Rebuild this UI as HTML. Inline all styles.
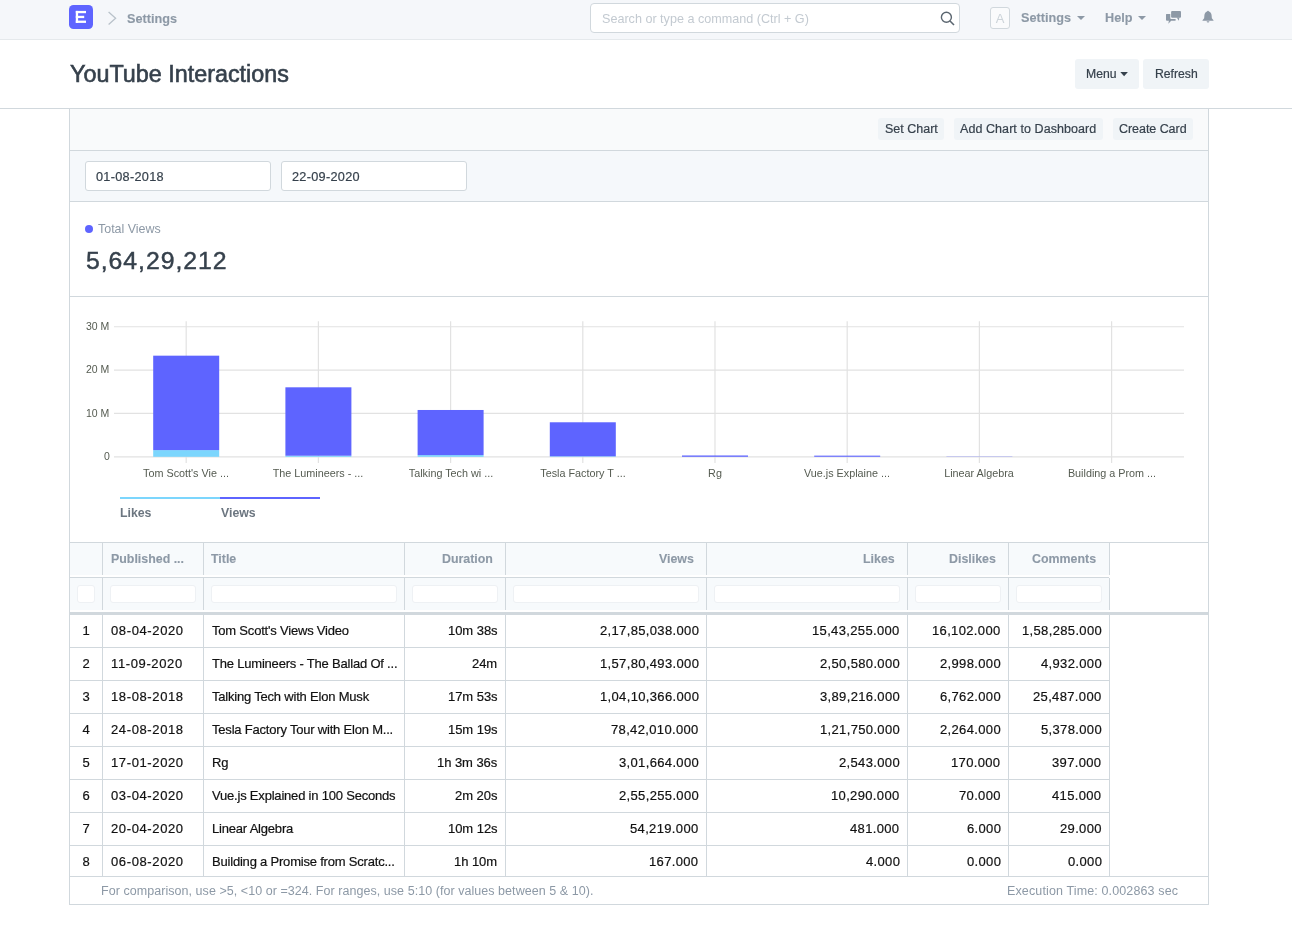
<!DOCTYPE html>
<html>
<head>
<meta charset="utf-8">
<style>
*{box-sizing:border-box;margin:0;padding:0}
html,body{width:1292px;height:932px;overflow:hidden;background:#fff}
body{position:relative;font-family:"Liberation Sans",sans-serif;color:#36414c}
.a{position:absolute}
.t{position:absolute;white-space:nowrap;line-height:1;will-change:transform}
</style>
</head>
<body>
<div class="a" style="left:0px;top:0px;width:1292px;height:39px;background:#f5f7fa;"></div>
<div class="a" style="left:0px;top:39px;width:1292px;height:1px;background:#e5e9ec;"></div>
<svg class="a" style="left:0;top:0" width="1292" height="40">
  <rect x="69" y="5" width="24" height="24" rx="4.5" fill="#5e64ff"/>
  <g fill="#fff">
    <rect x="75.8" y="10.9" width="2.3" height="12"/>
    <rect x="75.8" y="10.9" width="10.2" height="2.3"/>
    <rect x="75.8" y="15.8" width="8.4" height="2.3"/>
    <rect x="75.8" y="20.6" width="10.2" height="2.3"/>
  </g>
  <polyline points="108.6,12 115.6,18.3 108.6,24.6" fill="none" stroke="#b9c2ca" stroke-width="1.3"/>
</svg>
<div class="t" style="top:12.69px;font-size:12.67px;color:#8d99a6;font-weight:bold;left:126.60px;-webkit-text-stroke:0.12px currentColor">Settings</div>
<div class="a" style="left:590px;top:3px;width:370px;height:30px;background:#fff;border:1px solid #d1d8dd;border-radius:4px"></div>
<div class="t" style="top:12.95px;font-size:12.6px;color:#c3cad1;left:601.80px;">Search or type a command (Ctrl + G)</div>
<svg class="a" style="left:930px;top:5px" width="30" height="26">
  <circle cx="16.4" cy="12.3" r="5" fill="none" stroke="#5b6670" stroke-width="1.4"/>
  <line x1="20" y1="16" x2="24" y2="20" stroke="#5b6670" stroke-width="1.6"/>
</svg>
<div class="a" style="left:990px;top:7px;width:20px;height:22px;background:#fafbfc;border:1px solid #d1d8dd;border-radius:3px"></div>
<div class="t" style="top:11.71px;font-size:13px;color:#cdd4da;left:700.00px;width:600px;text-align:center;">A</div>
<div class="t" style="top:12.29px;font-size:12.67px;color:#8d99a6;font-weight:bold;left:1020.70px;-webkit-text-stroke:0.12px currentColor">Settings</div>
<div class="t" style="top:12.29px;font-size:12.67px;color:#8d99a6;font-weight:bold;left:1105.00px;-webkit-text-stroke:0.12px currentColor">Help</div>
<svg class="a" style="left:1070px;top:0" width="150" height="40">
  <polygon points="7,16 15,16 11,20" fill="#8d99a6"/>
  <polygon points="68,16 76,16 72,20" fill="#8d99a6"/>
  <path d="M96.5 14 h4 v5.1 h4.5 a0.8 0.8 0 0 1 0 1.6 H101.2 L98.3 23.8 L98.9 20.7 H96.9 a0.9 0.9 0 0 1 -0.9 -0.9 V14.9 a0.9 0.9 0 0 1 0.5 -0.9z" fill="#8d99a6"/>
  <rect x="100.6" y="10.6" width="11" height="7.8" rx="1.2" fill="#f5f7fa"/>
  <rect x="101.1" y="11" width="9.9" height="6.8" rx="1" fill="#8d99a6"/>
  <polygon points="106.7,17.6 109.3,17.6 108.9,20.7" fill="#8d99a6"/>
  <path d="M138 10.8 c0.55 0 0.9 0.35 0.9 0.7 c1.7 0.5 2.5 2.0 2.7 3.8 l0.25 3.0 l1.65 1.9 v0.5 h-11 v-0.5 l1.65 -1.9 l0.25 -3.0 c0.2 -1.8 1 -3.3 2.7 -3.8 c0 -0.35 0.35 -0.7 0.9 -0.7z" fill="#8d99a6"/>
  <path d="M136.6 21.2 h2.8 a1.4 1.4 0 0 1 -2.8 0z" fill="#8d99a6"/>
</svg>
<div class="t" style="top:63.17px;font-size:23.35px;color:#36414c;left:70.00px;-webkit-text-stroke:0.6px #36414c">YouTube Interactions</div>
<div class="a" style="left:1075px;top:59px;width:64px;height:30px;background:#f0f4f7;border-radius:3px"></div>
<div class="t" style="top:67.59px;font-size:12.2px;color:#36414c;left:1086.30px;-webkit-text-stroke:0.2px currentColor">Menu</div>
<svg class="a" style="left:1115px;top:66px" width="16" height="14"><polygon points="5.3,6 12.9,6 9.1,10.2" fill="#36414c"/></svg>
<div class="a" style="left:1143px;top:59px;width:66px;height:30px;background:#f0f4f7;border-radius:3px"></div>
<div class="t" style="top:67.59px;font-size:12.2px;color:#36414c;left:1154.70px;-webkit-text-stroke:0.2px currentColor">Refresh</div>
<div class="a" style="left:0px;top:108px;width:1292px;height:1px;background:#d1d8dd;"></div>
<div class="a" style="left:69px;top:108px;width:1px;height:797px;background:#d1d8dd;"></div>
<div class="a" style="left:1208px;top:108px;width:1px;height:797px;background:#d1d8dd;"></div>
<div class="a" style="left:69px;top:904px;width:1140px;height:1px;background:#d1d8dd;"></div>
<div class="a" style="left:70px;top:109px;width:1138px;height:41px;background:#f9fafb;"></div>
<div class="a" style="left:70px;top:150px;width:1138px;height:1px;background:#d1d8dd;"></div>
<div class="a" style="left:878px;top:118px;width:66px;height:22px;background:#f0f4f7;border-radius:3px"></div>
<div class="a" style="left:954px;top:118px;width:149px;height:22px;background:#f0f4f7;border-radius:3px"></div>
<div class="a" style="left:1113px;top:118px;width:80px;height:22px;background:#f0f4f7;border-radius:3px"></div>
<div class="t" style="top:122.54px;font-size:12.5px;color:#36414c;left:884.50px;-webkit-text-stroke:0.2px currentColor">Set Chart</div>
<div class="t" style="top:122.54px;font-size:12.5px;color:#36414c;letter-spacing:0.07px;left:960.20px;-webkit-text-stroke:0.2px currentColor">Add Chart to Dashboard</div>
<div class="t" style="top:122.54px;font-size:12.5px;color:#36414c;letter-spacing:-0.05px;left:1119.30px;-webkit-text-stroke:0.2px currentColor">Create Card</div>
<div class="a" style="left:70px;top:151px;width:1138px;height:50px;background:#f5f8fb;"></div>
<div class="a" style="left:70px;top:201px;width:1138px;height:1px;background:#d1d8dd;"></div>
<div class="a" style="left:85px;top:161px;width:186px;height:30px;background:#fff;border:1px solid #d1d8dd;border-radius:3px"></div>
<div class="a" style="left:281px;top:161px;width:186px;height:30px;background:#fff;border:1px solid #d1d8dd;border-radius:3px"></div>
<div class="t" style="top:170.77px;font-size:12.7px;color:#36414c;letter-spacing:0.3px;left:96.20px;-webkit-text-stroke:0.2px currentColor">01-08-2018</div>
<div class="t" style="top:170.77px;font-size:12.7px;color:#36414c;letter-spacing:0.3px;left:292.20px;-webkit-text-stroke:0.2px currentColor">22-09-2020</div>
<div class="a" style="left:85px;top:225px;width:8px;height:8px;border-radius:50%;background:#5e64ff"></div>
<div class="t" style="top:223.27px;font-size:12.46px;color:#8d99a6;left:98.00px;">Total Views</div>
<div class="t" style="top:249.34px;font-size:24.8px;color:#36414c;letter-spacing:0.95px;left:86.20px;-webkit-text-stroke:0.45px #36414c">5,64,29,212</div>
<div class="a" style="left:70px;top:296px;width:1138px;height:1px;background:#d1d8dd;"></div>
<svg class="a" style="left:0;top:0" width="1292" height="932">
<line x1="114" x2="1184" y1="456.80" y2="456.80" stroke="#e2e2e2" stroke-width="1.2"/>
<line x1="114" x2="1184" y1="413.45" y2="413.45" stroke="#e2e2e2" stroke-width="1.2"/>
<line x1="114" x2="1184" y1="370.10" y2="370.10" stroke="#e2e2e2" stroke-width="1.2"/>
<line x1="114" x2="1184" y1="326.75" y2="326.75" stroke="#e2e2e2" stroke-width="1.2"/>
<line x1="186.20" x2="186.20" y1="321.2" y2="462.9" stroke="#e2e2e2" stroke-width="1.2"/>
<line x1="318.40" x2="318.40" y1="321.2" y2="462.9" stroke="#e2e2e2" stroke-width="1.2"/>
<line x1="450.60" x2="450.60" y1="321.2" y2="462.9" stroke="#e2e2e2" stroke-width="1.2"/>
<line x1="582.80" x2="582.80" y1="321.2" y2="462.9" stroke="#e2e2e2" stroke-width="1.2"/>
<line x1="715.00" x2="715.00" y1="321.2" y2="462.9" stroke="#e2e2e2" stroke-width="1.2"/>
<line x1="847.20" x2="847.20" y1="321.2" y2="462.9" stroke="#e2e2e2" stroke-width="1.2"/>
<line x1="979.40" x2="979.40" y1="321.2" y2="462.9" stroke="#e2e2e2" stroke-width="1.2"/>
<line x1="1111.60" x2="1111.60" y1="321.2" y2="462.9" stroke="#e2e2e2" stroke-width="1.2"/>
<rect x="153.20" y="450.11" width="66" height="6.69" fill="#7cd6fd"/>
<rect x="153.20" y="355.67" width="66" height="94.44" fill="#5e64ff"/>
<rect x="285.40" y="455.71" width="66" height="1.09" fill="#7cd6fd"/>
<rect x="285.40" y="387.31" width="66" height="68.41" fill="#5e64ff"/>
<rect x="417.60" y="455.11" width="66" height="1.69" fill="#7cd6fd"/>
<rect x="417.60" y="409.98" width="66" height="45.13" fill="#5e64ff"/>
<rect x="549.80" y="456.27" width="66" height="0.53" fill="#7cd6fd"/>
<rect x="549.80" y="422.28" width="66" height="34.00" fill="#5e64ff"/>
<rect x="682.00" y="455.48" width="66" height="1.31" fill="#5e64ff"/>
<rect x="814.20" y="455.65" width="66" height="1.11" fill="#5e64ff"/>
<rect x="946.40" y="456.56" width="66" height="0.24" fill="#5e64ff"/>
</svg>
<div class="t" style="top:450.93px;font-size:10.5px;color:#555b51;right:1182.50px;">0</div>
<div class="t" style="top:407.58px;font-size:10.5px;color:#555b51;right:1182.50px;">10 M</div>
<div class="t" style="top:364.23px;font-size:10.5px;color:#555b51;right:1182.50px;">20 M</div>
<div class="t" style="top:320.88px;font-size:10.5px;color:#555b51;right:1182.50px;">30 M</div>
<div class="t" style="top:467.67px;font-size:10.8px;color:#555b51;left:-113.80px;width:600px;text-align:center;">Tom Scott&#x27;s Vie ...</div>
<div class="t" style="top:467.67px;font-size:10.8px;color:#555b51;left:18.40px;width:600px;text-align:center;">The Lumineers - ...</div>
<div class="t" style="top:467.67px;font-size:10.8px;color:#555b51;left:150.60px;width:600px;text-align:center;">Talking Tech wi ...</div>
<div class="t" style="top:467.67px;font-size:10.8px;color:#555b51;left:282.80px;width:600px;text-align:center;">Tesla Factory T ...</div>
<div class="t" style="top:467.67px;font-size:10.8px;color:#555b51;left:415.00px;width:600px;text-align:center;">Rg</div>
<div class="t" style="top:467.67px;font-size:10.8px;color:#555b51;left:547.20px;width:600px;text-align:center;">Vue.js Explaine ...</div>
<div class="t" style="top:467.67px;font-size:10.8px;color:#555b51;left:679.40px;width:600px;text-align:center;">Linear Algebra</div>
<div class="t" style="top:467.67px;font-size:10.8px;color:#555b51;left:811.60px;width:600px;text-align:center;">Building a Prom ...</div>
<div class="a" style="left:120px;top:497px;width:100px;height:2px;background:#7cd6fd;"></div>
<div class="a" style="left:220px;top:497px;width:100px;height:2px;background:#5e64ff;"></div>
<div class="t" style="top:507.41px;font-size:12.3px;color:#6c7680;font-weight:bold;left:120.40px;">Likes</div>
<div class="t" style="top:507.41px;font-size:12.3px;color:#6c7680;font-weight:bold;left:220.70px;">Views</div>
<div class="a" style="left:70px;top:542px;width:1138px;height:1px;background:#d1d8dd;"></div>
<div class="a" style="left:70px;top:543px;width:1039px;height:32px;background:#f7fafc;"></div>
<div class="a" style="left:70px;top:577px;width:1039px;height:1px;background:#d1d8dd;"></div>
<div class="a" style="left:70px;top:578px;width:1039px;height:32px;background:#f7fafc;"></div>
<div class="a" style="left:70px;top:612px;width:1138px;height:3px;background:#d1d8dd;"></div>
<div class="a" style="left:102px;top:543px;width:1px;height:32px;background:#d1d8dd;"></div>
<div class="a" style="left:102px;top:578px;width:32px;height:0px;background:#d1d8dd;"></div>
<div class="a" style="left:203px;top:543px;width:1px;height:32px;background:#d1d8dd;"></div>
<div class="a" style="left:203px;top:578px;width:32px;height:0px;background:#d1d8dd;"></div>
<div class="a" style="left:404px;top:543px;width:1px;height:32px;background:#d1d8dd;"></div>
<div class="a" style="left:404px;top:578px;width:32px;height:0px;background:#d1d8dd;"></div>
<div class="a" style="left:505px;top:543px;width:1px;height:32px;background:#d1d8dd;"></div>
<div class="a" style="left:505px;top:578px;width:32px;height:0px;background:#d1d8dd;"></div>
<div class="a" style="left:706px;top:543px;width:1px;height:32px;background:#d1d8dd;"></div>
<div class="a" style="left:706px;top:578px;width:32px;height:0px;background:#d1d8dd;"></div>
<div class="a" style="left:907px;top:543px;width:1px;height:32px;background:#d1d8dd;"></div>
<div class="a" style="left:907px;top:578px;width:32px;height:0px;background:#d1d8dd;"></div>
<div class="a" style="left:1008px;top:543px;width:1px;height:32px;background:#d1d8dd;"></div>
<div class="a" style="left:1008px;top:578px;width:32px;height:0px;background:#d1d8dd;"></div>
<div class="a" style="left:1109px;top:543px;width:1px;height:32px;background:#d1d8dd;"></div>
<div class="a" style="left:1109px;top:578px;width:32px;height:0px;background:#d1d8dd;"></div>
<div class="a" style="left:102px;top:578px;width:1px;height:32px;background:#d1d8dd;"></div>
<div class="a" style="left:203px;top:578px;width:1px;height:32px;background:#d1d8dd;"></div>
<div class="a" style="left:404px;top:578px;width:1px;height:32px;background:#d1d8dd;"></div>
<div class="a" style="left:505px;top:578px;width:1px;height:32px;background:#d1d8dd;"></div>
<div class="a" style="left:706px;top:578px;width:1px;height:32px;background:#d1d8dd;"></div>
<div class="a" style="left:907px;top:578px;width:1px;height:32px;background:#d1d8dd;"></div>
<div class="a" style="left:1008px;top:578px;width:1px;height:32px;background:#d1d8dd;"></div>
<div class="a" style="left:1109px;top:578px;width:1px;height:32px;background:#d1d8dd;"></div>
<div class="a" style="left:77px;top:585px;width:18px;height:18px;background:#fff;border:1px solid #eef1f4;border-radius:3px"></div>
<div class="a" style="left:110px;top:585px;width:86px;height:18px;background:#fff;border:1px solid #eef1f4;border-radius:3px"></div>
<div class="a" style="left:211px;top:585px;width:186px;height:18px;background:#fff;border:1px solid #eef1f4;border-radius:3px"></div>
<div class="a" style="left:412px;top:585px;width:86px;height:18px;background:#fff;border:1px solid #eef1f4;border-radius:3px"></div>
<div class="a" style="left:513px;top:585px;width:186px;height:18px;background:#fff;border:1px solid #eef1f4;border-radius:3px"></div>
<div class="a" style="left:714px;top:585px;width:186px;height:18px;background:#fff;border:1px solid #eef1f4;border-radius:3px"></div>
<div class="a" style="left:915px;top:585px;width:86px;height:18px;background:#fff;border:1px solid #eef1f4;border-radius:3px"></div>
<div class="a" style="left:1016px;top:585px;width:86px;height:18px;background:#fff;border:1px solid #eef1f4;border-radius:3px"></div>
<div class="t" style="top:553.02px;font-size:12.4px;color:#8d99a6;font-weight:bold;left:110.80px;-webkit-text-stroke:0.12px currentColor">Published ...</div>
<div class="t" style="top:553.02px;font-size:12.4px;color:#8d99a6;font-weight:bold;left:211.00px;-webkit-text-stroke:0.12px currentColor">Title</div>
<div class="t" style="top:553.02px;font-size:12.4px;color:#8d99a6;font-weight:bold;right:799.50px;-webkit-text-stroke:0.12px currentColor">Duration</div>
<div class="t" style="top:553.02px;font-size:12.4px;color:#8d99a6;font-weight:bold;right:598.50px;-webkit-text-stroke:0.12px currentColor">Views</div>
<div class="t" style="top:553.02px;font-size:12.4px;color:#8d99a6;font-weight:bold;right:397.50px;-webkit-text-stroke:0.12px currentColor">Likes</div>
<div class="t" style="top:553.02px;font-size:12.4px;color:#8d99a6;font-weight:bold;right:296.50px;-webkit-text-stroke:0.12px currentColor">Dislikes</div>
<div class="t" style="top:553.02px;font-size:12.4px;color:#8d99a6;font-weight:bold;right:195.50px;-webkit-text-stroke:0.12px currentColor">Comments</div>
<div class="a" style="left:102px;top:615px;width:1px;height:33px;background:#d1d8dd;"></div>
<div class="a" style="left:203px;top:615px;width:1px;height:33px;background:#d1d8dd;"></div>
<div class="a" style="left:404px;top:615px;width:1px;height:33px;background:#d1d8dd;"></div>
<div class="a" style="left:505px;top:615px;width:1px;height:33px;background:#d1d8dd;"></div>
<div class="a" style="left:706px;top:615px;width:1px;height:33px;background:#d1d8dd;"></div>
<div class="a" style="left:907px;top:615px;width:1px;height:33px;background:#d1d8dd;"></div>
<div class="a" style="left:1008px;top:615px;width:1px;height:33px;background:#d1d8dd;"></div>
<div class="a" style="left:1109px;top:615px;width:1px;height:33px;background:#d1d8dd;"></div>
<div class="a" style="left:70px;top:647px;width:1039px;height:1px;background:#d1d8dd;"></div>
<div class="t" style="top:623.72px;font-size:13px;color:#111;left:-214.00px;width:600px;text-align:center;-webkit-text-stroke:0.2px currentColor">1</div>
<div class="t" style="top:623.72px;font-size:13px;color:#111;letter-spacing:0.62px;left:110.60px;-webkit-text-stroke:0.2px currentColor">08-04-2020</div>
<div class="t" style="top:623.72px;font-size:13px;color:#111;letter-spacing:-0.2px;left:211.50px;-webkit-text-stroke:0.2px currentColor">Tom Scott&#x27;s Views Video</div>
<div class="t" style="top:623.72px;font-size:13px;color:#111;letter-spacing:-0.05px;right:794.55px;-webkit-text-stroke:0.2px currentColor">10m 38s</div>
<div class="t" style="top:623.72px;font-size:13px;color:#111;letter-spacing:0.35px;right:593.15px;-webkit-text-stroke:0.2px currentColor">2,17,85,038.000</div>
<div class="t" style="top:623.72px;font-size:13px;color:#111;letter-spacing:0.35px;right:392.15px;-webkit-text-stroke:0.2px currentColor">15,43,255.000</div>
<div class="t" style="top:623.72px;font-size:13px;color:#111;letter-spacing:0.35px;right:291.15px;-webkit-text-stroke:0.2px currentColor">16,102.000</div>
<div class="t" style="top:623.72px;font-size:13px;color:#111;letter-spacing:0.35px;right:190.15px;-webkit-text-stroke:0.2px currentColor">1,58,285.000</div>
<div class="a" style="left:102px;top:648px;width:1px;height:33px;background:#d1d8dd;"></div>
<div class="a" style="left:203px;top:648px;width:1px;height:33px;background:#d1d8dd;"></div>
<div class="a" style="left:404px;top:648px;width:1px;height:33px;background:#d1d8dd;"></div>
<div class="a" style="left:505px;top:648px;width:1px;height:33px;background:#d1d8dd;"></div>
<div class="a" style="left:706px;top:648px;width:1px;height:33px;background:#d1d8dd;"></div>
<div class="a" style="left:907px;top:648px;width:1px;height:33px;background:#d1d8dd;"></div>
<div class="a" style="left:1008px;top:648px;width:1px;height:33px;background:#d1d8dd;"></div>
<div class="a" style="left:1109px;top:648px;width:1px;height:33px;background:#d1d8dd;"></div>
<div class="a" style="left:70px;top:680px;width:1039px;height:1px;background:#d1d8dd;"></div>
<div class="t" style="top:656.72px;font-size:13px;color:#111;left:-214.00px;width:600px;text-align:center;-webkit-text-stroke:0.2px currentColor">2</div>
<div class="t" style="top:656.72px;font-size:13px;color:#111;letter-spacing:0.62px;left:110.60px;-webkit-text-stroke:0.2px currentColor">11-09-2020</div>
<div class="t" style="top:656.72px;font-size:13px;color:#111;letter-spacing:-0.2px;left:211.50px;-webkit-text-stroke:0.2px currentColor">The Lumineers - The Ballad Of ...</div>
<div class="t" style="top:656.72px;font-size:13px;color:#111;letter-spacing:-0.05px;right:794.55px;-webkit-text-stroke:0.2px currentColor">24m</div>
<div class="t" style="top:656.72px;font-size:13px;color:#111;letter-spacing:0.35px;right:593.15px;-webkit-text-stroke:0.2px currentColor">1,57,80,493.000</div>
<div class="t" style="top:656.72px;font-size:13px;color:#111;letter-spacing:0.35px;right:392.15px;-webkit-text-stroke:0.2px currentColor">2,50,580.000</div>
<div class="t" style="top:656.72px;font-size:13px;color:#111;letter-spacing:0.35px;right:291.15px;-webkit-text-stroke:0.2px currentColor">2,998.000</div>
<div class="t" style="top:656.72px;font-size:13px;color:#111;letter-spacing:0.35px;right:190.15px;-webkit-text-stroke:0.2px currentColor">4,932.000</div>
<div class="a" style="left:102px;top:681px;width:1px;height:33px;background:#d1d8dd;"></div>
<div class="a" style="left:203px;top:681px;width:1px;height:33px;background:#d1d8dd;"></div>
<div class="a" style="left:404px;top:681px;width:1px;height:33px;background:#d1d8dd;"></div>
<div class="a" style="left:505px;top:681px;width:1px;height:33px;background:#d1d8dd;"></div>
<div class="a" style="left:706px;top:681px;width:1px;height:33px;background:#d1d8dd;"></div>
<div class="a" style="left:907px;top:681px;width:1px;height:33px;background:#d1d8dd;"></div>
<div class="a" style="left:1008px;top:681px;width:1px;height:33px;background:#d1d8dd;"></div>
<div class="a" style="left:1109px;top:681px;width:1px;height:33px;background:#d1d8dd;"></div>
<div class="a" style="left:70px;top:713px;width:1039px;height:1px;background:#d1d8dd;"></div>
<div class="t" style="top:689.72px;font-size:13px;color:#111;left:-214.00px;width:600px;text-align:center;-webkit-text-stroke:0.2px currentColor">3</div>
<div class="t" style="top:689.72px;font-size:13px;color:#111;letter-spacing:0.62px;left:110.60px;-webkit-text-stroke:0.2px currentColor">18-08-2018</div>
<div class="t" style="top:689.72px;font-size:13px;color:#111;letter-spacing:-0.2px;left:211.50px;-webkit-text-stroke:0.2px currentColor">Talking Tech with Elon Musk</div>
<div class="t" style="top:689.72px;font-size:13px;color:#111;letter-spacing:-0.05px;right:794.55px;-webkit-text-stroke:0.2px currentColor">17m 53s</div>
<div class="t" style="top:689.72px;font-size:13px;color:#111;letter-spacing:0.35px;right:593.15px;-webkit-text-stroke:0.2px currentColor">1,04,10,366.000</div>
<div class="t" style="top:689.72px;font-size:13px;color:#111;letter-spacing:0.35px;right:392.15px;-webkit-text-stroke:0.2px currentColor">3,89,216.000</div>
<div class="t" style="top:689.72px;font-size:13px;color:#111;letter-spacing:0.35px;right:291.15px;-webkit-text-stroke:0.2px currentColor">6,762.000</div>
<div class="t" style="top:689.72px;font-size:13px;color:#111;letter-spacing:0.35px;right:190.15px;-webkit-text-stroke:0.2px currentColor">25,487.000</div>
<div class="a" style="left:102px;top:714px;width:1px;height:33px;background:#d1d8dd;"></div>
<div class="a" style="left:203px;top:714px;width:1px;height:33px;background:#d1d8dd;"></div>
<div class="a" style="left:404px;top:714px;width:1px;height:33px;background:#d1d8dd;"></div>
<div class="a" style="left:505px;top:714px;width:1px;height:33px;background:#d1d8dd;"></div>
<div class="a" style="left:706px;top:714px;width:1px;height:33px;background:#d1d8dd;"></div>
<div class="a" style="left:907px;top:714px;width:1px;height:33px;background:#d1d8dd;"></div>
<div class="a" style="left:1008px;top:714px;width:1px;height:33px;background:#d1d8dd;"></div>
<div class="a" style="left:1109px;top:714px;width:1px;height:33px;background:#d1d8dd;"></div>
<div class="a" style="left:70px;top:746px;width:1039px;height:1px;background:#d1d8dd;"></div>
<div class="t" style="top:722.72px;font-size:13px;color:#111;left:-214.00px;width:600px;text-align:center;-webkit-text-stroke:0.2px currentColor">4</div>
<div class="t" style="top:722.72px;font-size:13px;color:#111;letter-spacing:0.62px;left:110.60px;-webkit-text-stroke:0.2px currentColor">24-08-2018</div>
<div class="t" style="top:722.72px;font-size:13px;color:#111;letter-spacing:-0.2px;left:211.50px;-webkit-text-stroke:0.2px currentColor">Tesla Factory Tour with Elon M...</div>
<div class="t" style="top:722.72px;font-size:13px;color:#111;letter-spacing:-0.05px;right:794.55px;-webkit-text-stroke:0.2px currentColor">15m 19s</div>
<div class="t" style="top:722.72px;font-size:13px;color:#111;letter-spacing:0.35px;right:593.15px;-webkit-text-stroke:0.2px currentColor">78,42,010.000</div>
<div class="t" style="top:722.72px;font-size:13px;color:#111;letter-spacing:0.35px;right:392.15px;-webkit-text-stroke:0.2px currentColor">1,21,750.000</div>
<div class="t" style="top:722.72px;font-size:13px;color:#111;letter-spacing:0.35px;right:291.15px;-webkit-text-stroke:0.2px currentColor">2,264.000</div>
<div class="t" style="top:722.72px;font-size:13px;color:#111;letter-spacing:0.35px;right:190.15px;-webkit-text-stroke:0.2px currentColor">5,378.000</div>
<div class="a" style="left:102px;top:747px;width:1px;height:33px;background:#d1d8dd;"></div>
<div class="a" style="left:203px;top:747px;width:1px;height:33px;background:#d1d8dd;"></div>
<div class="a" style="left:404px;top:747px;width:1px;height:33px;background:#d1d8dd;"></div>
<div class="a" style="left:505px;top:747px;width:1px;height:33px;background:#d1d8dd;"></div>
<div class="a" style="left:706px;top:747px;width:1px;height:33px;background:#d1d8dd;"></div>
<div class="a" style="left:907px;top:747px;width:1px;height:33px;background:#d1d8dd;"></div>
<div class="a" style="left:1008px;top:747px;width:1px;height:33px;background:#d1d8dd;"></div>
<div class="a" style="left:1109px;top:747px;width:1px;height:33px;background:#d1d8dd;"></div>
<div class="a" style="left:70px;top:779px;width:1039px;height:1px;background:#d1d8dd;"></div>
<div class="t" style="top:755.72px;font-size:13px;color:#111;left:-214.00px;width:600px;text-align:center;-webkit-text-stroke:0.2px currentColor">5</div>
<div class="t" style="top:755.72px;font-size:13px;color:#111;letter-spacing:0.62px;left:110.60px;-webkit-text-stroke:0.2px currentColor">17-01-2020</div>
<div class="t" style="top:755.72px;font-size:13px;color:#111;letter-spacing:-0.2px;left:211.50px;-webkit-text-stroke:0.2px currentColor">Rg</div>
<div class="t" style="top:755.72px;font-size:13px;color:#111;letter-spacing:-0.05px;right:794.55px;-webkit-text-stroke:0.2px currentColor">1h 3m 36s</div>
<div class="t" style="top:755.72px;font-size:13px;color:#111;letter-spacing:0.35px;right:593.15px;-webkit-text-stroke:0.2px currentColor">3,01,664.000</div>
<div class="t" style="top:755.72px;font-size:13px;color:#111;letter-spacing:0.35px;right:392.15px;-webkit-text-stroke:0.2px currentColor">2,543.000</div>
<div class="t" style="top:755.72px;font-size:13px;color:#111;letter-spacing:0.35px;right:291.15px;-webkit-text-stroke:0.2px currentColor">170.000</div>
<div class="t" style="top:755.72px;font-size:13px;color:#111;letter-spacing:0.35px;right:190.15px;-webkit-text-stroke:0.2px currentColor">397.000</div>
<div class="a" style="left:102px;top:780px;width:1px;height:33px;background:#d1d8dd;"></div>
<div class="a" style="left:203px;top:780px;width:1px;height:33px;background:#d1d8dd;"></div>
<div class="a" style="left:404px;top:780px;width:1px;height:33px;background:#d1d8dd;"></div>
<div class="a" style="left:505px;top:780px;width:1px;height:33px;background:#d1d8dd;"></div>
<div class="a" style="left:706px;top:780px;width:1px;height:33px;background:#d1d8dd;"></div>
<div class="a" style="left:907px;top:780px;width:1px;height:33px;background:#d1d8dd;"></div>
<div class="a" style="left:1008px;top:780px;width:1px;height:33px;background:#d1d8dd;"></div>
<div class="a" style="left:1109px;top:780px;width:1px;height:33px;background:#d1d8dd;"></div>
<div class="a" style="left:70px;top:812px;width:1039px;height:1px;background:#d1d8dd;"></div>
<div class="t" style="top:788.72px;font-size:13px;color:#111;left:-214.00px;width:600px;text-align:center;-webkit-text-stroke:0.2px currentColor">6</div>
<div class="t" style="top:788.72px;font-size:13px;color:#111;letter-spacing:0.62px;left:110.60px;-webkit-text-stroke:0.2px currentColor">03-04-2020</div>
<div class="t" style="top:788.72px;font-size:13px;color:#111;letter-spacing:-0.2px;left:211.50px;-webkit-text-stroke:0.2px currentColor">Vue.js Explained in 100 Seconds</div>
<div class="t" style="top:788.72px;font-size:13px;color:#111;letter-spacing:-0.05px;right:794.55px;-webkit-text-stroke:0.2px currentColor">2m 20s</div>
<div class="t" style="top:788.72px;font-size:13px;color:#111;letter-spacing:0.35px;right:593.15px;-webkit-text-stroke:0.2px currentColor">2,55,255.000</div>
<div class="t" style="top:788.72px;font-size:13px;color:#111;letter-spacing:0.35px;right:392.15px;-webkit-text-stroke:0.2px currentColor">10,290.000</div>
<div class="t" style="top:788.72px;font-size:13px;color:#111;letter-spacing:0.35px;right:291.15px;-webkit-text-stroke:0.2px currentColor">70.000</div>
<div class="t" style="top:788.72px;font-size:13px;color:#111;letter-spacing:0.35px;right:190.15px;-webkit-text-stroke:0.2px currentColor">415.000</div>
<div class="a" style="left:102px;top:813px;width:1px;height:33px;background:#d1d8dd;"></div>
<div class="a" style="left:203px;top:813px;width:1px;height:33px;background:#d1d8dd;"></div>
<div class="a" style="left:404px;top:813px;width:1px;height:33px;background:#d1d8dd;"></div>
<div class="a" style="left:505px;top:813px;width:1px;height:33px;background:#d1d8dd;"></div>
<div class="a" style="left:706px;top:813px;width:1px;height:33px;background:#d1d8dd;"></div>
<div class="a" style="left:907px;top:813px;width:1px;height:33px;background:#d1d8dd;"></div>
<div class="a" style="left:1008px;top:813px;width:1px;height:33px;background:#d1d8dd;"></div>
<div class="a" style="left:1109px;top:813px;width:1px;height:33px;background:#d1d8dd;"></div>
<div class="a" style="left:70px;top:845px;width:1039px;height:1px;background:#d1d8dd;"></div>
<div class="t" style="top:821.72px;font-size:13px;color:#111;left:-214.00px;width:600px;text-align:center;-webkit-text-stroke:0.2px currentColor">7</div>
<div class="t" style="top:821.72px;font-size:13px;color:#111;letter-spacing:0.62px;left:110.60px;-webkit-text-stroke:0.2px currentColor">20-04-2020</div>
<div class="t" style="top:821.72px;font-size:13px;color:#111;letter-spacing:-0.2px;left:211.50px;-webkit-text-stroke:0.2px currentColor">Linear Algebra</div>
<div class="t" style="top:821.72px;font-size:13px;color:#111;letter-spacing:-0.05px;right:794.55px;-webkit-text-stroke:0.2px currentColor">10m 12s</div>
<div class="t" style="top:821.72px;font-size:13px;color:#111;letter-spacing:0.35px;right:593.15px;-webkit-text-stroke:0.2px currentColor">54,219.000</div>
<div class="t" style="top:821.72px;font-size:13px;color:#111;letter-spacing:0.35px;right:392.15px;-webkit-text-stroke:0.2px currentColor">481.000</div>
<div class="t" style="top:821.72px;font-size:13px;color:#111;letter-spacing:0.35px;right:291.15px;-webkit-text-stroke:0.2px currentColor">6.000</div>
<div class="t" style="top:821.72px;font-size:13px;color:#111;letter-spacing:0.35px;right:190.15px;-webkit-text-stroke:0.2px currentColor">29.000</div>
<div class="a" style="left:102px;top:846px;width:1px;height:30px;background:#d1d8dd;"></div>
<div class="a" style="left:203px;top:846px;width:1px;height:30px;background:#d1d8dd;"></div>
<div class="a" style="left:404px;top:846px;width:1px;height:30px;background:#d1d8dd;"></div>
<div class="a" style="left:505px;top:846px;width:1px;height:30px;background:#d1d8dd;"></div>
<div class="a" style="left:706px;top:846px;width:1px;height:30px;background:#d1d8dd;"></div>
<div class="a" style="left:907px;top:846px;width:1px;height:30px;background:#d1d8dd;"></div>
<div class="a" style="left:1008px;top:846px;width:1px;height:30px;background:#d1d8dd;"></div>
<div class="a" style="left:1109px;top:846px;width:1px;height:30px;background:#d1d8dd;"></div>
<div class="t" style="top:854.72px;font-size:13px;color:#111;left:-214.00px;width:600px;text-align:center;-webkit-text-stroke:0.2px currentColor">8</div>
<div class="t" style="top:854.72px;font-size:13px;color:#111;letter-spacing:0.62px;left:110.60px;-webkit-text-stroke:0.2px currentColor">06-08-2020</div>
<div class="t" style="top:854.72px;font-size:13px;color:#111;letter-spacing:-0.2px;left:211.50px;-webkit-text-stroke:0.2px currentColor">Building a Promise from Scratc...</div>
<div class="t" style="top:854.72px;font-size:13px;color:#111;letter-spacing:-0.05px;right:794.55px;-webkit-text-stroke:0.2px currentColor">1h 10m</div>
<div class="t" style="top:854.72px;font-size:13px;color:#111;letter-spacing:0.35px;right:593.15px;-webkit-text-stroke:0.2px currentColor">167.000</div>
<div class="t" style="top:854.72px;font-size:13px;color:#111;letter-spacing:0.35px;right:392.15px;-webkit-text-stroke:0.2px currentColor">4.000</div>
<div class="t" style="top:854.72px;font-size:13px;color:#111;letter-spacing:0.35px;right:291.15px;-webkit-text-stroke:0.2px currentColor">0.000</div>
<div class="t" style="top:854.72px;font-size:13px;color:#111;letter-spacing:0.35px;right:190.15px;-webkit-text-stroke:0.2px currentColor">0.000</div>
<div class="a" style="left:70px;top:876px;width:1138px;height:1px;background:#d1d8dd;"></div>
<div class="t" style="top:885.24px;font-size:12.5px;color:#8d99a6;letter-spacing:0.05px;left:100.60px;">For comparison, use &gt;5, &lt;10 or =324. For ranges, use 5:10 (for values between 5 &amp; 10).</div>
<div class="t" style="top:885.24px;font-size:12.5px;color:#8d99a6;letter-spacing:0.13px;right:114.37px;">Execution Time: 0.002863 sec</div>
</body>
</html>
